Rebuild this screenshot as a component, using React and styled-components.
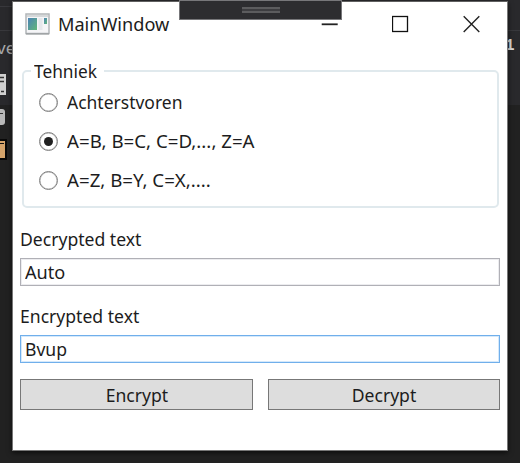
import React from "react";
import styled, { createGlobalStyle } from "styled-components";

const GlobalStyle = createGlobalStyle`
  * { box-sizing: border-box; }
  html, body { margin: 0; padding: 0; }
  body {
    overflow: hidden;
    background: #212121;
    color: #1c1c20;
    font-family: "Noto Sans", "Open Sans", sans-serif;
    font-size: 18.5px;
  }
`;

const Desktop = styled.main`
  position: relative;
  width: 520px;
  height: 463px;
  padding: 1px 12px 12px 12px;
  background: linear-gradient(#29292c 0 105px, #212121 105px);
  overflow: hidden;
`;

const Backdrop = styled.svg`
  position: absolute;
  inset: 0;
`;

const Window = styled.section`
  position: relative;
  display: flex;
  flex-direction: column;
  width: 496px;
  height: 450px;
  border: 1px solid #777;
  border-top-color: #606060;
  background: #fff;
  box-shadow: 0 2px 5px #0009;
`;

const TitleBar = styled.header`
  display: flex;
  align-items: center;
  height: 44px;
  padding: 0 26px 0 12px;
  flex: none;
`;

const AppIcon = styled.svg`
  width: 25px;
  height: 22px;
  margin-right: 8px;
`;

const Text = styled.span`
  display: inline-block;
  white-space: pre;
  line-height: 24px;
  transform: scaleX(${(p) => p.$stretch || 0.95});
  transform-origin: ${(p) => p.$origin || "left"} center;
`;

const CaptionButtons = styled.div`
  display: flex;
  gap: 53px;
  margin-left: auto;
  svg { display: block; width: 18px; height: 18px; }
`;

const DockTab = styled.div`
  position: absolute;
  left: 179px;
  top: 0;
  width: 163px;
  height: 20px;
  display: flex;
  justify-content: center;
  padding-top: 6px;
  border: 1px solid #77777a;
  background: #2d2d30;
`;

const Grip = styled.div`
  width: 38px;
  height: 6px;
  border: solid #5c5c5e;
  border-width: 2px 0;
  background: #3d3d40;
`;

const Content = styled.div`
  display: flex;
  flex-direction: column;
  padding: 0 7px;
`;

const Group = styled.fieldset`
  position: relative;
  width: 477px;
  height: 138px;
  margin: 24px 0 0 2px;
  padding: 18px 0 0 15px;
  border: 2px solid #e0e9ed;
  border-radius: 5px;
`;

const Legend = styled.div`
  position: absolute;
  left: 7px;
  top: -14px;
  width: 73px;
  height: 24px;
  padding-left: 3px;
  background: #fff;
`;

const Option = styled.label`
  display: flex;
  align-items: center;
  gap: 9px;
  height: 24px;
  margin-bottom: 15px;
`;

const Radio = styled.span`
  display: flex;
  align-items: center;
  justify-content: center;
  width: 19px;
  height: 19px;
  border: 1px solid #808080;
  box-shadow: inset 0 0 0 0.5px #aaa;
  border-radius: 50%;
  &::after {
    content: "";
    width: 9px;
    height: 9px;
    border-radius: 50%;
    background: ${(p) => (p.$checked ? "#202020" : "transparent")};
  }
`;

const FieldLabel = styled.div`
  height: 24px;
  margin-top: ${(p) => p.$gap}px;
`;

const Field = styled.div`
  display: flex;
  align-items: center;
  width: 480px;
  height: 28px;
  margin-top: 8px;
  padding-left: 4px;
  border: 1px solid ${(p) => (p.$focused ? "#70afeb" : "#b0b0b6")};
  box-shadow: inset 0 0 0 1px ${(p) => (p.$focused ? "#d5e9fb" : "#ececef")};
`;

const Actions = styled.div`
  display: grid;
  grid-template-columns: 233px 232px;
  gap: 15px;
  margin-top: 16px;
`;

const Button = styled.button`
  height: 31px;
  padding: 0;
  display: flex;
  align-items: center;
  justify-content: center;
  border: 1px solid #777;
  border-radius: 0;
  background: #ddd;
  color: inherit;
  font: inherit;
`;

const options = [
  { label: "Achterstvoren", stretch: 0.945 },
  { label: "A=B, B=C, C=D,..., Z=A", checked: true, stretch: 1.01 },
  { label: "A=Z, B=Y, C=X,....", stretch: 1.01 },
];

export default function App() {
  return (
    <Desktop>
      <GlobalStyle />
      <Backdrop width="520" height="463" viewBox="0 0 520 463">
        <path d="M0 6.5H12M508 30.5H520M0 30.5H12" stroke="#38383c" />
        <text x="-3" y="54" fontSize="17" fill="#aaa">ve</text>
        <rect x="-4" y="74" width="10" height="21" fill="#d0d0d0" />
        <path d="M0 77.5H4M0 81.5H4M1 91.5H4" stroke="#333" strokeWidth="1.5" />
        <rect x="-5" y="109" width="10" height="16" rx="3" fill="#b8b8b8" />
        <path d="M0 113.5H3" stroke="#333" />
        <rect x="-5" y="140" width="11" height="19" fill="#d5a46b" stroke="#080808" strokeWidth="2" />
        <path d="M0 143.5H4" stroke="#111" />
        <text x="505" y="50" fontSize="16" fontWeight="700" fontFamily="Liberation Mono, monospace" fill="#ddd">1</text>
      </Backdrop>
      <Window>
        <TitleBar>
          <AppIcon viewBox="0 0 25 22">
            <defs>
              <linearGradient id="pane" x1="0" y1="0" x2="1" y2="1">
                <stop offset="0" stopColor="#4b82b6" />
                <stop offset="1" stopColor="#62b779" />
              </linearGradient>
            </defs>
            <rect x="1" y="1" width="23" height="19.5" fill="#f5f5f7" stroke="#b1b5b8" strokeWidth="1.5" />
            <path d="M2 3H23" stroke="#d5d8da" strokeWidth="2" />
            <rect x="3" y="5" width="9" height="12" fill="url(#pane)" />
            <rect x="13.5" y="5" width="4" height="12" fill="#e5e7eb" />
            <rect x="19" y="5" width="3" height="6" fill="url(#pane)" />
            <path d="M1 21H24" stroke="#8f9395" />
          </AppIcon>
          <Text $stretch={0.98}>MainWindow</Text>
          <CaptionButtons>
            <svg viewBox="0 0 18 18"><path d="M.7 9.3H16.7" stroke="#222" strokeWidth="1.8" /></svg>
            <svg viewBox="0 0 18 18"><rect x=".5" y="1.5" width="15" height="15" fill="none" stroke="#111" strokeWidth="1.3" /></svg>
            <svg viewBox="0 0 18 18"><path d="M.7 1.3L16.3 16.9M16.3 1.3L.7 16.9" stroke="#222" strokeWidth="1.4" /></svg>
          </CaptionButtons>
        </TitleBar>
        <Content>
          <Group>
            <Legend><Text $stretch={0.935}>Tehniek</Text></Legend>
            {options.map((o) => (
              <Option key={o.label}>
                <Radio $checked={o.checked} />
                <Text $stretch={o.stretch}>{o.label}</Text>
              </Option>
            ))}
          </Group>
          <FieldLabel $gap={18}><Text>Decrypted text</Text></FieldLabel>
          <Field><Text $stretch={0.98}>Auto</Text></Field>
          <FieldLabel $gap={17}><Text>Encrypted text</Text></FieldLabel>
          <Field $focused><Text>Bvup</Text></Field>
          <Actions>
            <Button><Text $origin="center">Encrypt</Text></Button>
            <Button><Text $origin="center">Decrypt</Text></Button>
          </Actions>
        </Content>
      </Window>
      <DockTab><Grip /></DockTab>
    </Desktop>
  );
}
